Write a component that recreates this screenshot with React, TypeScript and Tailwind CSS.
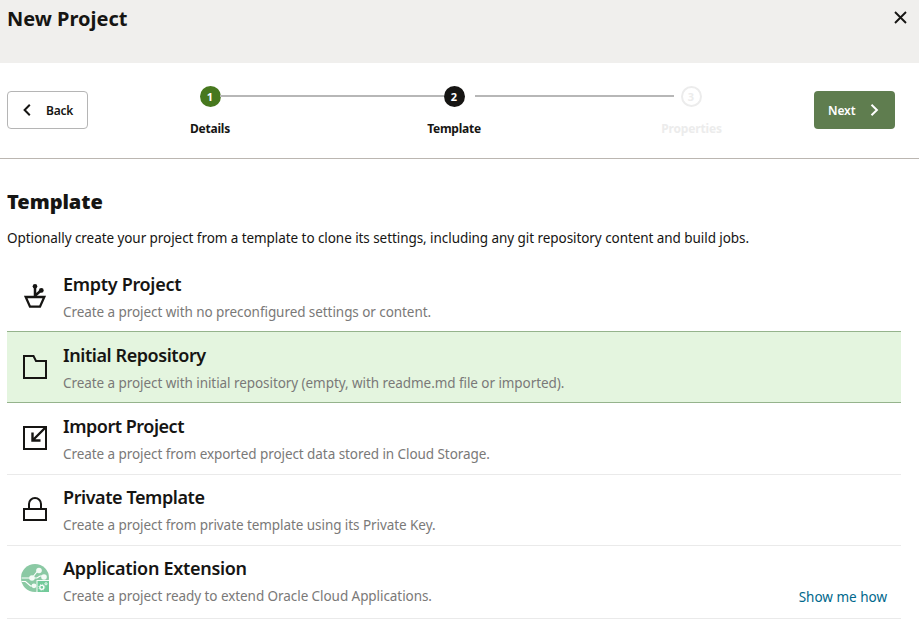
import type { ReactNode } from 'react'

function EmptyIcon() {
  return (
    <svg width="24" height="24" viewBox="0 0 24 24" fill="none" stroke="#161513" strokeWidth="2.300">
      <path d="M2.700 13h18.600L17 22.600H7z" />
      <path d="M12 13V2M12.300 11.500L18 6.500" strokeWidth="2.500" />
      <circle cx="12" cy="2.300" r="2.300" fill="#161513" stroke="none" />
      <circle cx="18.300" cy="6.400" r="2.400" fill="#161513" stroke="none" />
    </svg>
  )
}

function FolderIcon() {
  return (
    <svg width="24" height="24" viewBox="0 0 24 24" fill="none" stroke="#161513" strokeWidth="2">
      <path d="M1 1h9.500l2.500 5H23v17H1z" />
    </svg>
  )
}

function ImportIcon() {
  return (
    <svg width="24" height="24" viewBox="0 0 24 24" fill="none" stroke="#161513" strokeWidth="2">
      <path d="M1 1h22v22H1z" />
      <path d="M22.500 1.500L9.500 14.500M9.500 6.500V14.500h8" strokeWidth="2.400" />
    </svg>
  )
}

function LockIcon() {
  return (
    <svg width="24" height="24" viewBox="0 0 24 24" fill="none" stroke="#161513" strokeWidth="2">
      <path d="M1 12h22v11H1zM6 12V7a6 6 0 0 1 12 0v5" />
    </svg>
  )
}

function ExtensionIcon() {
  return (
    <svg width="30" height="30" viewBox="0 0 30 30" fill="none">
      <circle cx="15" cy="15" r="14" fill="#8bc9a4" />
      <g stroke="#fff" strokeWidth="1.200">
        <path d="M1.500 15h10.500l6-7.500M1.500 18.500h4l5 4.500h3.500M12 15h5l3-2h4" />
      </g>
      <g fill="#f4fbf6">
        <circle cx="12" cy="15" r="2.800" />
        <circle cx="19" cy="7.500" r="2.800" />
        <circle cx="24" cy="14" r="2.800" />
        <circle cx="14" cy="22.800" r="2.400" />
        <path d="M16.500 17h12.500v12H16.500z" />
      </g>
      <path d="M17.500 18h11.500v11H17.500z" fill="#72ca9a" />
      <circle cx="21.800" cy="24.300" r="2" stroke="#fff" strokeWidth="1.200" />
      <circle cx="21.800" cy="24.300" r="3" stroke="#fff" strokeWidth="0.700" strokeDasharray="1.180 1.180" />
      <circle cx="26" cy="20.800" r="1.100" stroke="#fff" strokeWidth="0.900" />
    </svg>
  )
}

interface TemplateItem {
  title: string
  description: string
  icon: ReactNode
  iconClass: string
  titleClass: string
  rowClass: string
  link?: string
}

const templates: TemplateItem[] = [
  {
    title: 'Empty Project',
    description: 'Create a project with no preconfigured settings or content.',
    icon: <EmptyIcon />,
    iconClass: 'pt-[14px]',
    titleClass: 'tracking-[-0.3px]',
    rowClass: 'h-[71px] pt-[10px]',
  },
  {
    title: 'Initial Repository',
    description: 'Create a project with initial repository (empty, with readme.md file or imported).',
    icon: <FolderIcon />,
    iconClass: 'pt-[14px]',
    titleClass: 'tracking-[-0.43px]',
    rowClass: 'h-[72px] pt-[9px] bg-[#e4f5df] border-y border-[#95b38c]',
  },
  {
    title: 'Import Project',
    description: 'Create a project from exported project data stored in Cloud Storage.',
    icon: <ImportIcon />,
    iconClass: 'pt-[14px]',
    titleClass: 'tracking-[-0.48px]',
    rowClass: 'h-[72px] pt-[9px] border-b border-[#eaeaea]',
  },
  {
    title: 'Private Template',
    description: 'Create a project from private template using its Private Key.',
    icon: <LockIcon />,
    iconClass: 'pt-[14px]',
    titleClass: 'tracking-[-0.43px]',
    rowClass: 'h-[71px] pt-2 border-b border-[#eaeaea]',
  },
  {
    title: 'Application Extension',
    description: 'Create a project ready to extend Oracle Cloud Applications.',
    icon: <ExtensionIcon />,
    iconClass: 'pt-[9px]',
    titleClass: 'tracking-[-0.3px]',
    rowClass: 'h-[73px] pt-2 border-b border-[#eaeaea]',
    link: 'Show me how',
  },
]

export default function App() {
  return (
    <div className="h-[622px] w-[919px] overflow-hidden bg-white font-['Noto_Sans',sans-serif] text-[#161513]">
      {/* Header */}
      <header className="flex h-[63px] items-start justify-between bg-[#f0efed] pl-[7px] pr-3">
        <h1 className="mt-[5px] text-xl leading-7 font-bold whitespace-nowrap">New Project</h1>
        <button className="mt-[11px]" aria-label="Close">
          <svg width="13" height="13" viewBox="0 0 13 13" fill="none" stroke="#161513" strokeWidth="1.900">
            <path d="M1 1l11 11M12 1L1 12" />
          </svg>
        </button>
      </header>

      {/* Wizard steps */}
      <nav className="flex h-24 items-start border-b border-[#bbb6b1] pl-[7px] pr-6">
        <button className="mt-7 flex h-[38px] w-[81px] shrink-0 items-center rounded border border-[#b5b5b5] pl-[15px]">
          <svg width="8" height="12" viewBox="0 0 8 12" fill="none" stroke="#161513" strokeWidth="2">
            <path d="M6.800 0.800L1.600 6l5.200 5.200" />
          </svg>
          <span className="mt-px ml-[15px] text-xs font-semibold tracking-[-0.2px]">Back</span>
        </button>

        <ol className="mt-[23px] ml-[82px] flex items-start text-xs leading-4 font-bold">
          <li className="flex w-[80px] flex-col items-center">
            <span className="flex size-[21px] items-center justify-center rounded-full bg-[#47781e] text-[11px] text-white">1</span>
            <span className="mt-[14px] tracking-[-0.2px]">Details</span>
          </li>
          <li className="mt-[9px] -mx-[30px] h-0.5 w-[224px] bg-[#b7b7b7]" />
          <li className="flex w-[80px] flex-col items-center">
            <span className="flex size-[21px] items-center justify-center rounded-full bg-[#161513] text-[11px] text-white">2</span>
            <span className="mt-[14px] tracking-[-0.25px]">Template</span>
          </li>
          <li className="mt-[9px] -ml-[19px] -mr-[23px] h-0.5 w-[199px] bg-[#b7b7b7]" />
          <li className="flex w-[80px] flex-col items-center text-[#ececec]">
            <span className="flex size-[21px] items-center justify-center rounded-full border-2 border-[#ececec] text-[11px]">3</span>
            <span className="mt-[14px] pl-px tracking-[-0.15px]">Properties</span>
          </li>
        </ol>

        <button className="mt-7 ml-auto flex h-[38px] w-[81px] shrink-0 items-center rounded bg-[#5f7d4f] pl-[14px] text-white">
          <span className="mt-px w-[27px] text-xs font-semibold tracking-[-0.1px]">Next</span>
          <svg className="ml-[15px]" width="9" height="12" viewBox="0 0 9 12" fill="none" stroke="#fff" strokeWidth="2">
            <path d="M1.500 0.800L6.900 6l-5.400 5.200" />
          </svg>
        </button>
      </nav>

      {/* Template list */}
      <main className="pl-[7px] pr-[18px]">
        <h2 className="pt-[29px] text-xl leading-7 font-black tracking-[-0.05px]">Template</h2>
        <p className="mt-3 h-[33px] text-[13.5px] leading-5 tracking-[-0.065px] whitespace-nowrap">
          Optionally create your project from a template to clone its settings, including any git repository content and build jobs.
        </p>
        <ul className="-mt-px">
          {templates.map((item) => (
            <li key={item.title} className={`flex items-start ${item.rowClass}`}>
              <span className={`flex w-14 shrink-0 justify-center ${item.iconClass}`}>{item.icon}</span>
              <div className="flex-1 whitespace-nowrap">
                <h3 className={`text-lg leading-7 font-semibold ${item.titleClass}`}>{item.title}</h3>
                <p className="text-[13.5px] leading-7 tracking-[-0.065px] text-[#7a7978]">{item.description}</p>
              </div>
              {item.link && (
                <a href="#" className="mt-[29px] mr-[14px] text-[13.5px] leading-7 text-[#00688c]">{item.link}</a>
              )}
            </li>
          ))}
        </ul>
      </main>
    </div>
  )
}
